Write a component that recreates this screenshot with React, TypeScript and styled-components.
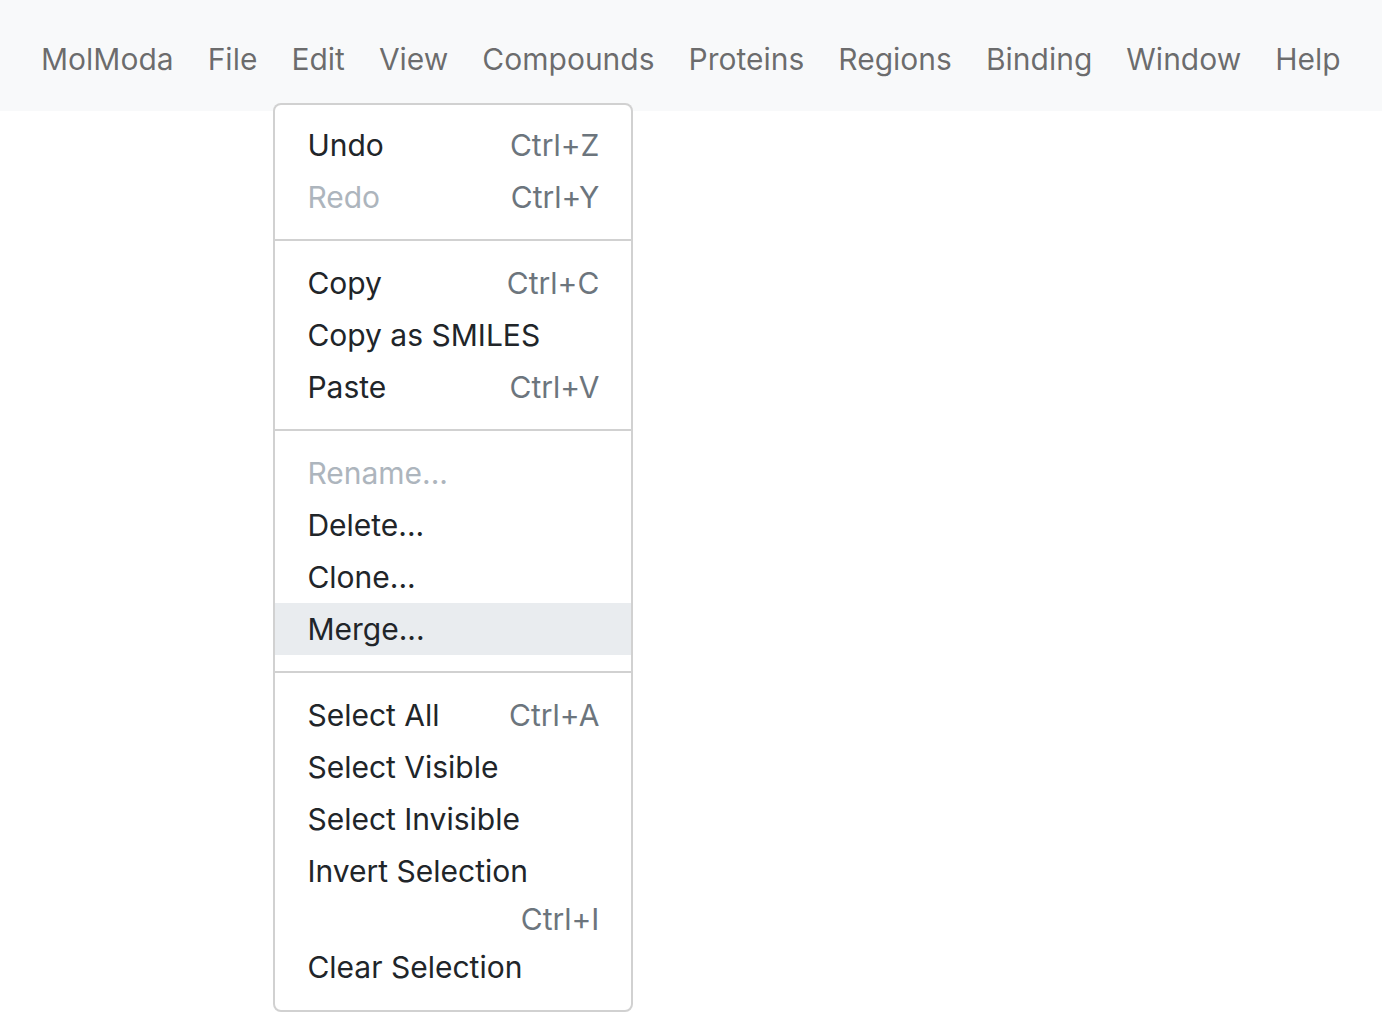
import React from 'react';
import styled, { createGlobalStyle } from 'styled-components';

const GlobalStyle = createGlobalStyle`
  html, body {
    margin: 0;
    padding: 0;
    background: #ffffff;
    font-family: Inter, "Noto Sans", "Liberation Sans", sans-serif;
  }
`;

const Page = styled.div`
  min-height: 100vh;
  background: #ffffff;
`;

const Navbar = styled.nav`
  display: flex;
  align-items: center;
  background: #f8f9fa;
  padding: 19px 24px 12px;
`;

const NavList = styled.ul`
  display: flex;
  list-style: none;
  margin: 0;
  padding: 0;
`;

const NavItem = styled.li`
  position: relative;
`;

const NavLink = styled.a`
  display: block;
  padding: 16px 17px;
  font-size: 30px;
  line-height: 48px;
  color: rgba(0, 0, 0, 0.58);
  text-decoration: none;
  cursor: pointer;
`;

const Dropdown = styled.div`
  position: absolute;
  top: calc(100% + 4px);
  left: -1px;
  width: 360px;
  box-sizing: border-box;
  background: #ffffff;
  border: 2px solid rgba(0, 0, 0, 0.18);
  border-radius: 8px;
  padding: 14px 0 17px;
  z-index: 10;
`;

const Divider = styled.hr`
  margin: 16px 0;
  border: 0;
  border-top: 2px solid rgba(0, 0, 0, 0.18);
`;

const Item = styled.a<{ $disabled?: boolean; $active?: boolean; $stacked?: boolean }>`
  display: flex;
  flex-direction: ${p => (p.$stacked ? 'column' : 'row')};
  justify-content: space-between;
  gap: 20px;
  padding: 4px 32px;
  font-size: 30px;
  line-height: 44px;
  color: ${p => (p.$disabled ? '#adb5bd' : '#212529')};
  background: ${p => (p.$active ? '#e9ecef' : 'transparent')};
  white-space: nowrap;
  cursor: ${p => (p.$disabled ? 'default' : 'pointer')};
  ${p =>
    p.$stacked &&
    `
    gap: 0;
    & > span:last-child {
      align-self: flex-end;
      margin-top: 4px;
      margin-bottom: -4px;
    }
  `}
`;

const Shortcut = styled.span`
  margin-left: auto;
  color: #6c757d;
`;

type Entry = {
  label: string;
  shortcut?: string;
  disabled?: boolean;
  active?: boolean;
  stacked?: boolean;
};

const groups: Entry[][] = [
  [
    { label: 'Undo', shortcut: 'Ctrl+Z' },
    { label: 'Redo', shortcut: 'Ctrl+Y', disabled: true },
  ],
  [
    { label: 'Copy', shortcut: 'Ctrl+C' },
    { label: 'Copy as SMILES' },
    { label: 'Paste', shortcut: 'Ctrl+V' },
  ],
  [
    { label: 'Rename...', disabled: true },
    { label: 'Delete...' },
    { label: 'Clone...' },
    { label: 'Merge...', active: true },
  ],
  [
    { label: 'Select All', shortcut: 'Ctrl+A' },
    { label: 'Select Visible' },
    { label: 'Select Invisible' },
    // the shortcut does not fit beside this label, so it drops to its own line
    { label: 'Invert Selection', shortcut: 'Ctrl+I', stacked: true },
    { label: 'Clear Selection' },
  ],
];

const menus = ['MolModa', 'File', 'Edit', 'View', 'Compounds', 'Proteins', 'Regions', 'Binding', 'Window', 'Help'];

const EditMenu = () => (
  <Dropdown>
    {groups.map((group, gi) => (
      <React.Fragment key={gi}>
        {gi > 0 && <Divider />}
        {group.map(entry => (
          <Item
            key={entry.label}
            $disabled={entry.disabled}
            $active={entry.active}
            $stacked={entry.stacked}
          >
            <span>{entry.label}</span>
            {entry.shortcut && <Shortcut>{entry.shortcut}</Shortcut>}
          </Item>
        ))}
      </React.Fragment>
    ))}
  </Dropdown>
);

const App = () => (
  <Page>
    <GlobalStyle />
    <Navbar>
      <NavList>
        {menus.map(name => (
          <NavItem key={name}>
            <NavLink>{name}</NavLink>
            {name === 'Edit' && <EditMenu />}
          </NavItem>
        ))}
      </NavList>
    </Navbar>
  </Page>
);

export default App;
